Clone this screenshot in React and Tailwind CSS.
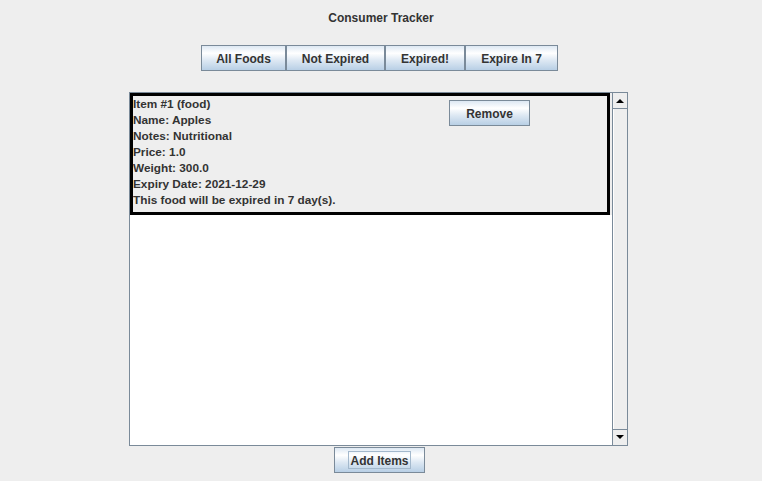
const font = { fontFamily: '"Liberation Sans", Arial, sans-serif' };

function SwingButton({ label, className = "", focused = false }) {
  return (
    <div
      className={`flex h-[26px] shrink-0 items-center justify-center border border-[#7a8a99] bg-[linear-gradient(to_bottom,#dde8f3_0%,#ffffff_30%,#dde8f3_60%,#b8cfe5_100%)] pt-[2px] text-[12px] font-bold text-[#333333] ${className}`}
    >
      {focused ? (
        <span className="-mt-[2px] flex h-[18px] items-center border border-[#a3b8cc] px-[1px] pt-[2px] leading-none">{label}</span>
      ) : (
        <span className="leading-none">{label}</span>
      )}
    </div>
  );
}

function Arrow({ up }) {
  return (
    <svg width="8" height="5" viewBox="0 0 8 5">
      {up ? <path d="M0 5 L4 1 L8 5 Z" fill="#000" /> : <path d="M0 0 L8 0 L4 4 Z" fill="#000" />}
    </svg>
  );
}

function ScrollBar() {
  return (
    <div className="flex w-[15px] shrink-0 flex-col border-l border-[#7a8a99] bg-[#eeeeee]">
      <div className="flex h-[16px] items-center justify-center border-b border-[#7a8a99] bg-[#eeeeee]">
        <Arrow up />
      </div>
      <div className="flex-1 border-l border-white bg-[#eeeeee]" />
      <div className="flex h-[16px] items-center justify-center border-t border-[#7a8a99] bg-[#eeeeee]">
        <Arrow />
      </div>
    </div>
  );
}

const lines = [
  "Item #1 (food)",
  "Name: Apples",
  "Notes: Nutritional",
  "Price: 1.0",
  "Weight: 300.0",
  "Expiry Date: 2021-12-29",
  "This food will be expired in 7 day(s).",
];

export default function App() {
  return (
    <div className="h-[481px] w-[762px] overflow-hidden bg-[#eeeeee] text-[#333333]" style={font}>
      <div className="mt-[11px] h-[15px] text-center text-[12px] font-bold leading-[15px]">Consumer Tracker</div>

      <div className="ml-[201px] mt-[19px] flex">
        <SwingButton label="All Foods" className="w-[85px]" />
        <SwingButton label="Not Expired" className="w-[99px]" />
        <SwingButton label="Expired!" className="w-[80px]" />
        <SwingButton label="Expire In 7" className="w-[93px]" />
      </div>

      <div className="ml-[129px] mt-[21px] flex h-[354px] w-[499px] border border-[#7a8a99]">
        <div className="flex-1 bg-white">
          <div className="h-[122px] bg-[#eeeeee]">
            <div className="flex h-[122px] w-[480px] border-[3px] border-black">
              <div className="w-[316px] text-[11.8px] font-bold leading-[16px] text-[#333333]">
                {lines.map((l) => (
                  <div key={l} className="whitespace-nowrap">{l}</div>
                ))}
              </div>
              <SwingButton label="Remove" className="mt-[4px] w-[81px]" />
            </div>
          </div>
        </div>
        <ScrollBar />
      </div>

      <div className="ml-[334px] mt-[1px] flex">
        <SwingButton label="Add Items" className="w-[91px]" focused />
      </div>
    </div>
  );
}
